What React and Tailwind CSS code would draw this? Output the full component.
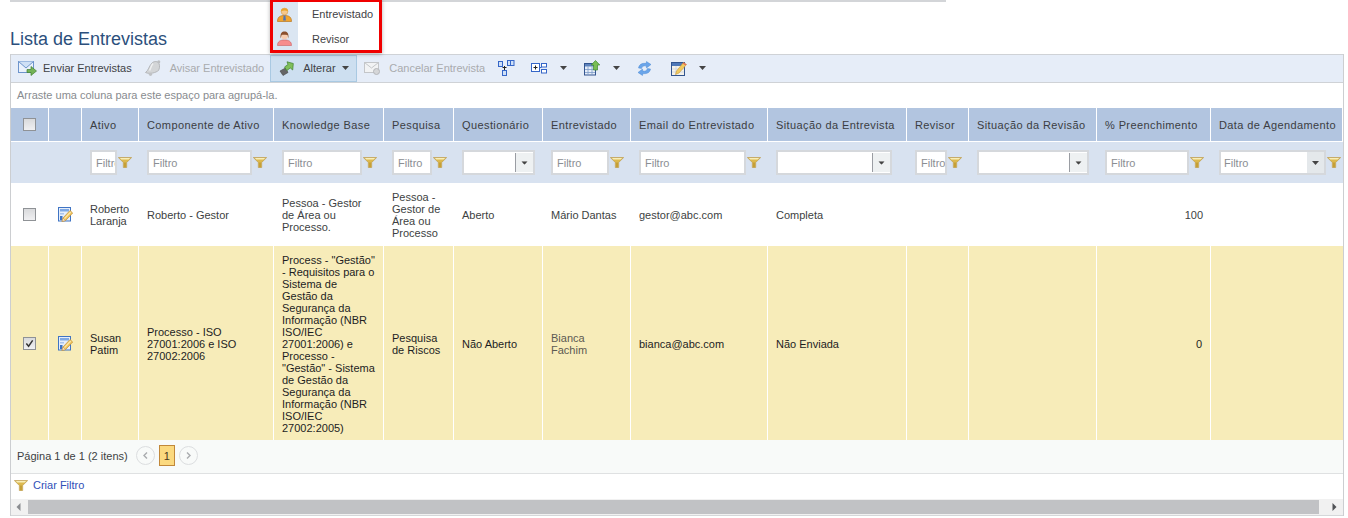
import React from "react";

const widths = ["w-[38px]","w-[33px]","w-[57px]","w-[135px]","w-[110px]","w-[70px]","w-[89px]","w-[88px]","w-[137px]","w-[139px]","w-[62px]","w-[128px]","w-[114px]","w-[132px]"];
const heads = ["","","Ativo","Componente de Ativo","Knowledge Base","Pesquisa","Questionário","Entrevistado","Email do Entrevistado","Situação da Entrevista","Revisor","Situação da Revisão","% Preenchimento","Data de Agendamento"];

function Funnel({ className = "" }) {
  return (
    <svg viewBox="0 0 14 11" className={"w-[14px] h-[11px] shrink-0 " + className}>
      <path d="M0.3 0.5 H13.7 L8.7 5.5 V10.5 H5.3 V5.5 Z" fill="#dcb94f" stroke="#b8964a" strokeWidth="0.6" />
      <path d="M1.8 1 H12.2 L10.6 2.6 H3.4 Z" fill="#f8eeb8" />
      <path d="M6.2 5.5 H7.8 V10.2 H6.2 Z" fill="#c09a30" />
    </svg>
  );
}

function Caret({ className = "" }) {
  return <svg viewBox="0 0 7 4" className={"w-[7px] h-[4px] shrink-0 " + className}><path d="M0 0 H7 L3.5 4 Z" fill="#444" /></svg>;
}

function FilterInput({ w }) {
  return (
    <div className="flex items-center">
      <input readOnly placeholder="Filtro" className={w + " h-[25px] border-2 border-[#d5d8dc] bg-white pl-[4px] text-[11px] font-normal outline-none placeholder:text-[#8b8e93]"} />
      <Funnel className="ml-[1px]" />
    </div>
  );
}

function FilterSelect({ w }) {
  return (
    <div className={w + " h-[25px] border-2 border-[#d5d8dc] bg-white flex justify-end"}>
      <div className="w-[18px] border-l border-[#9a9da3] my-[1px] bg-[#eef1f2] flex items-center justify-center">
        <Caret className="scale-90" />
      </div>
    </div>
  );
}

function CheckBox({ checked }) {
  return (
    <div className="w-[13px] h-[13px] border border-[#8f9296] bg-[linear-gradient(#d9dadc,#f0f0f2)] mx-auto flex items-center justify-center">
      {checked && <svg viewBox="0 0 10 10" className="w-[9px] h-[9px]"><path d="M1.5 5 L4 8 L8.5 1.5" fill="none" stroke="#333" strokeWidth="1.6" /></svg>}
    </div>
  );
}

function EditIcon() {
  return (
    <svg viewBox="0 0 15 15" className="w-[15px] h-[15px] mx-auto">
      <rect x="0.5" y="0.5" width="12" height="13.5" fill="#e6eefa" stroke="#3f74c4" />
      <rect x="2" y="2" width="9" height="2.5" fill="#7fa9e4" />
      <rect x="2" y="6" width="4" height="1.5" fill="#a9c4ec" />
      <rect x="2" y="9" width="2.5" height="4" fill="#3f74c4" />
      <path d="M4 14.5 L5 11 L12 3.5 L14.7 6 L7.6 13.5 Z" fill="#f2c45a" stroke="#c08f35" strokeWidth="0.7" />
      <path d="M6 11.2 L12.3 4.6 L13.2 5.4 L6.9 12 Z" fill="#fbe7a8" />
      <path d="M4 14.5 L5 11 L7.6 13.5 Z" fill="#f7e2c0" stroke="#a87f45" strokeWidth="0.4" />
    </svg>
  );
}

function SendIcon() {
  return (
    <svg viewBox="0 0 19 16" className="w-[19px] h-[16px]">
      <rect x="0.5" y="1.5" width="15" height="11" fill="#eaf1fb" stroke="#6d94cc" />
      <path d="M0.5 1.5 L8 8 L15.5 1.5" fill="#cfe0f5" stroke="#6d94cc" />
      <path d="M9 9.5 H13 V6.5 L18.5 11 L13 15.5 V12.5 H9 Z" fill="#74b356" stroke="#3f7f2f" strokeWidth="0.7" />
    </svg>
  );
}

function BellIcon() {
  return (
    <svg viewBox="0 0 16 16" className="w-[16px] h-[16px]">
      <path d="M0.5 12.5 C3.5 10.5 4 6 7 3 C9 1 13 1 14 3.5 C15 6 14.5 8.5 13.5 10.5 C11 12.5 5 14.5 0.5 12.5 Z" fill="#d3d5d7" stroke="#b5b7ba" />
      <path d="M8 3.5 C6 5.5 6 8 4.5 10.5" stroke="#eeeff0" strokeWidth="1.5" fill="none" />
      <circle cx="13.8" cy="1.8" r="1.5" fill="#bcbec1" />
      <circle cx="5.5" cy="14.3" r="1.6" fill="#c0c2c5" />
    </svg>
  );
}

function AlterIcon() {
  return (
    <svg viewBox="0 0 15 15" className="w-[15px] h-[15px]">
      <path d="M6.5 7 L1 10 L4 14.5 L9 11.5 Z" fill="#666" stroke="#444" strokeWidth="0.6" />
      <path d="M5.5 6 L9 3.5 L8 0.8 L14.3 2.5 L13.7 9 L11.3 7 L7.8 9.5 Z" fill="#7fbf5a" stroke="#3f7f2f" strokeWidth="0.7" />
    </svg>
  );
}

function CancelMail() {
  return (
    <svg viewBox="0 0 17 14" className="w-[17px] h-[14px]">
      <rect x="0.5" y="1.5" width="14" height="10" fill="#f2f3f4" stroke="#c4c6c9" />
      <path d="M0.5 1.5 L7.5 7 L14.5 1.5" fill="none" stroke="#c4c6c9" />
      <circle cx="12.5" cy="10.5" r="3" fill="#d5d6d8" stroke="#b5b7ba" />
    </svg>
  );
}

function HierIcon() {
  return (
    <svg viewBox="0 0 17 16" className="w-[17px] h-[16px]">
      <rect x="0.5" y="1.5" width="4" height="5" fill="#cfe0f7" stroke="#3566c8" />
      <rect x="9.5" y="0.5" width="3" height="5" fill="#cfe0f7" stroke="#3566c8" />
      <rect x="12.5" y="0.5" width="3.5" height="5" fill="#cfe0f7" stroke="#3566c8" />
      <rect x="4.5" y="10.5" width="4" height="5" fill="#cfe0f7" stroke="#3566c8" />
      <path d="M6.5 6 V10 M4.5 7.5 H8.5" stroke="#222" />
    </svg>
  );
}

function GroupIcon() {
  return (
    <svg viewBox="0 0 16 12" className="w-[16px] h-[12px]">
      <rect x="0.5" y="1.5" width="8" height="8" fill="#fff" stroke="#3566c8" />
      <path d="M2.5 5.5 H6.5 M4.5 3.5 V7.5" stroke="#222" />
      <rect x="10.5" y="1.5" width="5" height="3.5" fill="#fff" stroke="#3566c8" />
      <rect x="10.5" y="7.5" width="5" height="3.5" fill="#fff" stroke="#3566c8" />
      <path d="M8.5 5.5 H10.5" stroke="#3566c8" />
    </svg>
  );
}

function ExportIcon() {
  return (
    <svg viewBox="0 0 16 16" className="w-[16px] h-[16px]">
      <rect x="0.5" y="3.5" width="11" height="11.5" fill="#e7eef9" stroke="#33558f" />
      <rect x="1" y="4" width="10" height="2.5" fill="#5d83bd" />
      <path d="M4 6.5 V15 M8 6.5 V15 M1 9.5 H11 M1 12.5 H11" stroke="#7c9ac8" strokeWidth="0.8" />
      <path d="M11.5 0.5 L15.8 5 H13.5 V10 H9.5 V5 H7.2 Z" fill="#79bd55" stroke="#3f8a2f" strokeWidth="0.7" />
    </svg>
  );
}

function RefreshIcon() {
  return (
    <svg viewBox="0 0 15 15" className="w-[15px] h-[15px]">
      <path d="M1.5 7 C2 3.5 5 1.8 9 2.5 L9.5 0.5 L14 3.5 L9.5 7 L9.3 5 C6.5 4.5 5 5.5 4.5 7.5 Z" fill="#6aa5ea" stroke="#3a7fd0" strokeWidth="0.4" />
      <path d="M13.5 8 C13 11.5 10 13.2 6 12.5 L5.5 14.5 L1 11.5 L5.5 8 L5.7 10 C8.5 10.5 10 9.5 10.5 7.5 Z" fill="#6aa5ea" stroke="#3a7fd0" strokeWidth="0.4" />
    </svg>
  );
}

function NoteIcon() {
  return (
    <svg viewBox="0 0 16 15" className="w-[16px] h-[15px]">
      <rect x="0.5" y="1.5" width="13" height="13" fill="#f4f2ea" stroke="#33558f" />
      <rect x="1" y="2" width="12" height="3" fill="#4f78b8" />
      <path d="M1 8 H13 M1 11 H13 M5 5 V14" stroke="#c6cede" strokeWidth="0.7" />
      <path d="M4.5 13.5 L5.5 10 L12.5 1.5 L15.5 3.5 L8 12 Z" fill="#f1ca5e" stroke="#c7993a" strokeWidth="0.6" />
      <path d="M12.5 1.5 L15.5 3.5 L14.6 4.6 L11.6 2.6 Z" fill="#e56a5a" />
    </svg>
  );
}

function ManIcon() {
  return (
    <svg viewBox="0 0 15 15" className="w-[15px] h-[15px]">
      <path d="M0.5 14.5 C0.5 10 3 8.5 7.5 8.5 C12 8.5 14.5 10 14.5 14.5 Z" fill="#f2a52f" stroke="#b9771f" strokeWidth="0.7" />
      <path d="M6.6 8.5 H8.4 L8.9 13.5 H6.1 Z" fill="#4f74b8" />
      <circle cx="7.5" cy="4.5" r="3.4" fill="#f8c88a" stroke="#c99252" strokeWidth="0.5" />
      <path d="M4 4.5 C3.5 0.5 11.5 0 11 4.5 C9 3 6 3 4 4.5 Z" fill="#e8a52a" />
    </svg>
  );
}

function WomanIcon() {
  return (
    <svg viewBox="0 0 15 15" className="w-[15px] h-[15px]">
      <path d="M0.5 14.5 C0.5 10.5 3 9 7.5 9 C12 9 14.5 10.5 14.5 14.5 Z" fill="#f78d8d" stroke="#c96060" strokeWidth="0.6" />
      <circle cx="7.5" cy="4.8" r="3.4" fill="#f7cdb0" />
      <path d="M3.6 7.5 C3 2 5 0.5 7.5 0.5 C10 0.5 12 2 11.4 7.5 L10.5 4 C8.5 4 6 3.5 4.6 4 Z" fill="#8a4f2c" />
    </svg>
  );
}

function ToolText({ children, muted, className = "" }) {
  return <span className={"whitespace-nowrap " + (muted ? "text-[#a9abae] " : "text-[#3f4245] ") + className}>{children}</span>;
}

function Cell({ children, selected, className = "" }) {
  return <td className={"pl-2 pr-2 align-middle " + (selected ? "border-r border-white pt-[2px] " : "") + className}>{children}</td>;
}

export default function App() {
  return (
    <div className="relative w-[1348px] h-[518px] overflow-hidden bg-white font-['Liberation_Sans',Arial,sans-serif] text-[11px] leading-[12px] text-[#3d3f42]">
      <div className="ml-[10px] w-[936px] h-[2px] bg-[#d3d5d8]" />

      <h1 className="ml-[10px] mt-[27px] h-[25px] leading-[21px] text-[18px] text-[#2c4f7c] font-normal">Lista de Entrevistas</h1>

      <div className="ml-[10px] w-[1334px] border-x border-[#ccced1]">
        <div className="h-[29px] pb-[1px] flex items-center bg-[#e6edf8] border-y border-[#cfd2d6]">
          <div className="ml-[7px]"><SendIcon /></div>
          <ToolText className="ml-[6px]">Enviar Entrevistas</ToolText>
          <div className="ml-[13px]"><BellIcon /></div>
          <ToolText muted className="ml-[9px]">Avisar Entrevistado</ToolText>
          <div className="ml-[6px] w-[87px] h-[27px] flex items-center bg-[#cddff0] border border-[#a9c9e2] pl-2">
            <AlterIcon />
            <ToolText className="ml-[9px]">Alterar</ToolText>
            <Caret className="ml-[6px]" />
          </div>
          <div className="ml-[7px]"><CancelMail /></div>
          <ToolText muted className="ml-[8px]">Cancelar Entrevista</ToolText>
          <div className="ml-[13px]"><HierIcon /></div>
          <div className="ml-[16px]"><GroupIcon /></div>
          <Caret className="ml-[13px]" />
          <div className="ml-[17px]"><ExportIcon /></div>
          <Caret className="ml-[13px]" />
          <div className="ml-[17px]"><RefreshIcon /></div>
          <div className="ml-[19px]"><NoteIcon /></div>
          <Caret className="ml-[12px]" />
        </div>

        <div className="h-[25px] pb-[2px] flex items-center pl-[6px] text-[#888b8f]">Arraste uma coluna para este espaço para agrupá-la.</div>

        <table className="table-fixed w-[1332px] border-separate border-spacing-0">
          <colgroup>{widths.map((w, i) => <col key={i} className={w} />)}</colgroup>
          <thead>
            <tr className="h-[34px]">
              {heads.map((h, i) => (
                <th key={i} className={(i === 0 ? "" : "pl-2 ") + "bg-[#b2c5e0] text-left font-normal whitespace-nowrap tracking-[0.4px] text-[#3b3d42] border-r border-b border-white"}>
                  {i === 0 ? <CheckBox /> : h}
                </th>
              ))}
            </tr>
            <tr className="h-[41px] bg-[#d8e2f0]">
              <th /><th />
              <th className="pl-2"><FilterInput w="w-[27px]" /></th>
              <th className="pl-2"><FilterInput w="w-[105px]" /></th>
              <th className="pl-2"><FilterInput w="w-[80px]" /></th>
              <th className="pl-2"><FilterInput w="w-[40px]" /></th>
              <th className="pl-2"><FilterSelect w="w-[73px]" /></th>
              <th className="pl-2"><FilterInput w="w-[58px]" /></th>
              <th className="pl-2"><FilterInput w="w-[107px]" /></th>
              <th className="pl-2"><FilterSelect w="w-[116px]" /></th>
              <th className="pl-2"><FilterInput w="w-[32px]" /></th>
              <th className="pl-2"><FilterSelect w="w-[112px]" /></th>
              <th className="pl-2"><FilterInput w="w-[84px]" /></th>
              <th className="pl-2">
                <div className="flex items-center">
                  <div className="w-[107px] h-[25px] border-2 border-[#d5d8dc] bg-white flex items-center justify-between pl-[3px] font-normal text-[#8b8e93]">
                    Filtro
                    <div className="w-[17px] h-full bg-[#e4e8eb] flex items-center justify-center"><Caret /></div>
                  </div>
                  <Funnel className="ml-[1px]" />
                </div>
              </th>
            </tr>
          </thead>
          <tbody>
            <tr className="h-[63px]">
              <td className="pr-[1px]"><CheckBox /></td>
              <td className="pr-[1px]"><EditIcon /></td>
              <Cell>Roberto Laranja</Cell>
              <Cell>Roberto - Gestor</Cell>
              <Cell>Pessoa - Gestor<br />de Área ou<br />Processo.</Cell>
              <Cell className="pr-0">Pessoa - Gestor de Área ou Processo</Cell>
              <Cell>Aberto</Cell>
              <Cell>Mário Dantas</Cell>
              <Cell>gestor@abc.com</Cell>
              <Cell>Completa</Cell>
              <Cell />
              <Cell />
              <td className="text-right pr-2">100</td>
              <Cell />
            </tr>
            <tr className="h-[194px] bg-[#f7ecb9] text-[#1d1d1f]">
              <td className="border-r border-white"><CheckBox checked /></td>
              <td className="border-r border-white"><EditIcon /></td>
              <Cell selected>Susan Patim</Cell>
              <Cell selected>Processo - ISO 27001:2006 e ISO 27002:2006</Cell>
              <Cell selected className="pr-0 whitespace-nowrap">Process - "Gestão"<br />- Requisitos para o<br />Sistema de<br />Gestão da<br />Segurança da<br />Informação (NBR<br />ISO/IEC<br />27001:2006) e<br />Processo -<br />"Gestão" - Sistema<br />de Gestão da<br />Segurança da<br />Informação (NBR<br />ISO/IEC<br />27002:2005)</Cell>
              <Cell selected className="pr-0">Pesquisa de Riscos</Cell>
              <Cell selected>Não Aberto</Cell>
              <Cell selected className="text-[#5c5a52]">Bianca<br />Fachim</Cell>
              <Cell selected>bianca@abc.com</Cell>
              <Cell selected>Não Enviada</Cell>
              <Cell selected />
              <Cell selected />
              <td className="text-right pr-2 pt-[2px] border-r border-white">0</td>
              <Cell />
            </tr>
          </tbody>
        </table>

        <div className="h-[34px] pb-[2px] flex items-center bg-[#f8faf9] border-b border-[#dfe1e2] pl-[6px]">
          <span>Página 1 de 1 (2 itens)</span>
          <div className="ml-[8px] w-[19px] h-[19px] rounded-full border border-[#dcdee0] flex items-center justify-center">
            <svg viewBox="0 0 5 7" className="w-[5px] h-[7px]"><path d="M4 0.5 L1 3.5 L4 6.5" fill="none" stroke="#a9abae" strokeWidth="1.4" /></svg>
          </div>
          <div className="ml-[4px] w-[16px] h-[21px] bg-[#fbd97f] border border-[#c1883a] flex items-center justify-center text-[#4a3a20]">1</div>
          <div className="ml-[4px] w-[19px] h-[19px] rounded-full border border-[#dcdee0] flex items-center justify-center">
            <svg viewBox="0 0 5 7" className="w-[5px] h-[7px]"><path d="M1 0.5 L4 3.5 L1 6.5" fill="none" stroke="#a9abae" strokeWidth="1.4" /></svg>
          </div>
        </div>

        <div className="h-[25px] pb-[3px] flex items-center pl-[3px]">
          <Funnel />
          <span className="ml-[5px] text-[#3050b8]">Criar Filtro</span>
        </div>

        <div className="h-[17px] bg-[#f1f1f1] border-b border-[#d5d7d9] flex items-center">
          <svg viewBox="0 0 4 8" className="ml-[5px] w-[5px] h-[8px]"><path d="M4 0 V8 L0 4 Z" fill="#8a8c90" /></svg>
          <div className="ml-[7px] w-[1291px] h-[14px] bg-[#c1c2c5]" />
          <svg viewBox="0 0 4 8" className="ml-[13px] w-[5px] h-[8px]"><path d="M0 0 V8 L4 4 Z" fill="#505256" /></svg>
        </div>
      </div>

      <div className="absolute left-[270px] top-[-1px] w-[112px] h-[54px] border-[3px] border-[#f00000] bg-white shadow-[0_1px_4px_rgba(0,0,0,0.3)] flex flex-col">
        <div className="h-[24px] flex items-center bg-[linear-gradient(90deg,#dbe6f2_25px,#fff_25px)] pl-[4px]">
          <ManIcon /><span className="ml-[20px] text-[#3f4245]">Entrevistado</span>
        </div>
        <div className="h-[24px] pt-[1px] flex items-center bg-[linear-gradient(90deg,#dbe6f2_25px,#fff_25px)] pl-[4px]">
          <WomanIcon /><span className="ml-[20px] text-[#3f4245]">Revisor</span>
        </div>
      </div>
    </div>
  );
}
